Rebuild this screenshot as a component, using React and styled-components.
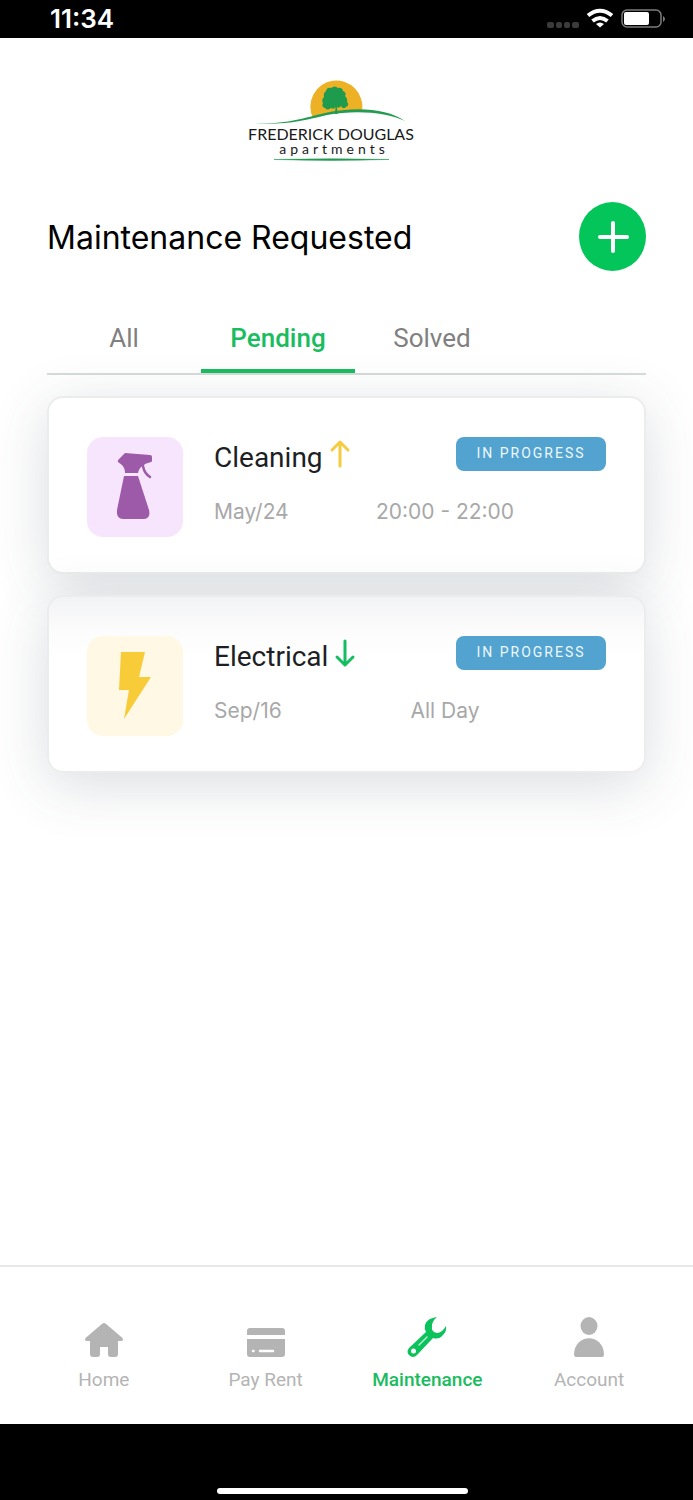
import React from 'react';
import styled, {createGlobalStyle} from 'styled-components';

const GlobalStyle = createGlobalStyle`
    * {
        box-sizing: border-box;
    }

    body {
        margin: 0;
        background: #fff;
        font-family: Roboto, "Liberation Sans", sans-serif;
    }

    h1, h2, p {
        margin: 0;
        font-weight: 400;
    }

    button {
        border: 0;
        padding: 0;
        background: none;
        font-family: inherit;
        cursor: pointer;
    }
`;

const Screen = styled.div`
    display: flex;
    flex-direction: column;
    min-height: 100vh;
`;

const StatusBar = styled.header`
    display: flex;
    align-items: center;
    justify-content: space-between;
    height: 38px;
    padding: 0 26px 0 50px;
    background: #000;
    color: #fff;
`;

const Clock = styled.time`
    font-family: Inter, sans-serif;
    font-size: 26px;
    font-weight: 600;
    line-height: 38px;
`;

const StatusIcons = styled.svg`
    width: 120px;
    height: 24px;
`;

const Main = styled.main`
    display: flex;
    flex: 1;
    flex-direction: column;
    padding: 38px 47px 40px;
`;

const LogoSvg = styled.svg`
    align-self: center;
    width: 180px;
    height: 90px;
    margin-right: 31px;
`;

const TitleRow = styled.div`
    display: flex;
    align-items: center;
    justify-content: space-between;
    margin-top: 36px;
`;

const Title = styled.h1`
    padding-top: 3px;
    color: #000;
    font-family: Inter, sans-serif;
    font-size: 32px;
    line-height: 40px;
`;

const AddButton = styled.button`
    display: flex;
    align-items: center;
    justify-content: center;
    width: 67px;
    height: 69px;
    border-radius: 50%;
    background: #04c55a;

    svg {
        width: 32px;
        height: 32px;
    }
`;

const Tabs = styled.div`
    display: flex;
    margin-top: 28px;
    border-bottom: 2px solid #d8dbdc;
`;

const Tab = styled.button`
    width: 154px;
    height: 74px;
    padding-top: 7px;
    border-bottom: 4px solid ${props => props.$active ? '#1abc60' : 'transparent'};
    color: ${props => props.$active ? '#1abc60' : '#808080'};
    font-size: 26px;
    font-weight: ${props => props.$active ? 500 : 400};
    line-height: 32px;
`;

const Requests = styled.div`
    display: flex;
    flex-direction: column;
    gap: 21px;
    margin-top: 21px;
`;

const Card = styled.article`
    display: flex;
    gap: 31px;
    padding: 39px 38px 35px;
    border: 2px solid #ebecec;
    border-radius: 16px;
    background: ${props => props.$shade};
    box-shadow: 0 12px 56px rgba(60, 72, 88, 0.19);
`;

const IconTile = styled.div`
    display: flex;
    flex: none;
    align-items: center;
    justify-content: center;
    width: 96px;
    height: 100px;
    border-radius: 16px;
    background: ${props => props.$tint};

    svg {
        width: 40px;
        height: 70px;
    }
`;

const Details = styled.div`
    flex: 1;
`;

const CardTop = styled.div`
    display: flex;
    align-items: flex-start;
    justify-content: space-between;
`;

const Name = styled.h2`
    display: flex;
    gap: 6px;
    color: #1d1f24;
    font-size: 28px;
    line-height: 42px;

    svg {
        width: 22px;
        height: 36px;
    }
`;

const Badge = styled.span`
    width: 150px;
    height: 34px;
    border-radius: 8px;
    background: #52a3d0;
    color: #eef8fc;
    font-size: 14px;
    letter-spacing: 2px;
    line-height: 33px;
    text-align: center;
`;

const CardMeta = styled.div`
    display: flex;
    margin-top: 19px;
    color: #a8a8a8;
    font-family: Inter, sans-serif;
    font-size: 21px;
    font-weight: 300;
    line-height: 28px;
`;

const DateText = styled.p`
    width: 134px;
`;

const TimeText = styled.p`
    width: 194px;
    text-align: center;
`;

const BottomNav = styled.nav`
    display: grid;
    grid-template-columns: repeat(4, 1fr);
    padding: 50px 23px 32px;
    border-top: 2px solid #e8e8e8;
`;

const NavLink = styled.a`
    display: flex;
    flex-direction: column;
    align-items: center;
    gap: 7px;
    color: ${props => props.$active ? '#1abc60' : '#b4b4b4'};
    font-size: 19px;
    font-weight: ${props => props.$active ? 500 : 400};
    line-height: 24px;
    text-decoration: none;

    svg {
        width: 42px;
        height: 44px;
    }
`;

const HomeArea = styled.footer`
    display: flex;
    align-items: flex-end;
    justify-content: center;
    height: 76px;
    padding: 0 8px 6px 0;
    background: #000;
`;

const HomeIndicator = styled.div`
    width: 251px;
    height: 6px;
    border-radius: 3px;
    background: #fff;
`;

const Logo = () => (
    <LogoSvg viewBox="0 0 180 90" role="img" aria-label="Frederick Douglas apartments">
        <path d="M72 42A26 26 0 1 1 121 35Q97 34 72 42Z" fill="#edb126"/>
        <path
            d="M94 38L94.500 31Q93 34 90 32Q86 35 84 32Q80 31 82 27Q80 24 83 21Q82 17 85 15Q86 11 90 12Q94 9 97 12Q101 11 102 15Q106 17 104 20Q107 23 106 26Q109 29 105 31Q102 34 100 30Q98 33 96 31L96.500 38Z"
            fill="#1f9b4e"/>
        <path d="M14 47.500C48 48 62 42 84 37C116 30 147 33 164 45C146 36.500 116 33.500 86 39C64 44 48 49 14 47.500Z"
              fill="#239b50"/>
        <text x="90" y="64" textAnchor="middle" fontFamily="Lato, sans-serif" fontSize="16" fill="#191919">FREDERICK DOUGLAS</text>
        <text x="93" y="78" textAnchor="middle" fontFamily="Lato, sans-serif" fontSize="14" letterSpacing="4" fill="#191919">apartments</text>
        <path d="M33 83.500Q90 82 148 83.500Q90 85.500 33 83.500Z" fill="#239b50" stroke="#239b50" strokeWidth="0.500"/>
    </LogoSvg>
);

const PhoneIcons = () => (
    <StatusIcons viewBox="0 0 120 24" role="img" aria-label="Wi-Fi and battery">
        <g fill="#3b3b3b">
            <rect x="0" y="15" width="7" height="6" rx="2"/>
            <rect x="9" y="15" width="6" height="6" rx="2"/>
            <rect x="17" y="15" width="6" height="6" rx="2"/>
            <rect x="25" y="15" width="7" height="6" rx="2"/>
        </g>
        <g fill="none" stroke="#fff" strokeWidth="4">
            <path d="M41 8.500Q53 -1 65 8.500"/>
            <path d="M45.500 14Q53 8 60.500 14"/>
        </g>
        <path d="M49 17Q53 14 57 17L53 20.500Z" fill="#fff"/>
        <rect x="75" y="3" width="39" height="17" rx="5" fill="none" stroke="#7c7c7c" strokeWidth="1.500"/>
        <rect x="77" y="5" width="25" height="13" rx="2" fill="#fff"/>
        <path d="M116 9Q120 12 116 15Z" fill="#7c7c7c"/>
    </StatusIcons>
);

const PlusIcon = () => (
    <svg viewBox="0 0 32 32" fill="none" stroke="#fff" strokeWidth="4" strokeLinecap="round" aria-hidden="true">
        <path d="M16 2V30M3 16H30"/>
    </svg>
);

const SprayIcon = () => (
    <svg viewBox="0 0 40 70" fill="#9c5aa8" aria-hidden="true">
        <path d="M10 1L35 3Q37 3 37 5V9Q37 10 36 10L30 12Q29 14 26 15Q24 17 23 21H10Q10 16 7 13L3 10Q2 9 4 7Z"/>
        <path d="M28 14Q29 21 35 25" fill="none" stroke="#9c5aa8" strokeWidth="2.500" strokeLinecap="round"/>
        <path d="M9 24H23L34 58Q36 67 28 67H8Q1 67 2 58Z"/>
    </svg>
);

const BoltIcon = () => (
    <svg viewBox="0 0 40 70" fill="#f8cb38" aria-hidden="true">
        <path d="M6 1H30L24 26H36L9 68L14 39H4Z"/>
    </svg>
);

const ArrowIcon = ({up}) => (
    <svg viewBox="0 0 22 36" fill="none" stroke={up ? '#f5cb40' : '#13bd60'} strokeWidth="3"
         strokeLinecap="round" strokeLinejoin="round" aria-hidden="true">
        <path d={up ? 'M11 29V5M3 13L11 5L19 13' : 'M11 5V29M3 21L11 29L19 21'}/>
    </svg>
);

const HomeIcon = () => (
    <svg viewBox="0 0 42 44" fill="currentColor" aria-hidden="true">
        <path d="M19.500 6.500Q21 5.500 22.500 6.500L39.500 21Q41 24 38 24H35V37Q35 40 32 40H28Q25 40 25 37V30H17V37Q17 40 14 40H10Q7 40 7 37V24H4Q1 24 2.500 21Z"/>
    </svg>
);

const CardIcon = () => (
    <svg viewBox="0 0 42 44" fill="currentColor" aria-hidden="true">
        <path d="M2 18V14Q2 11 5 11H37Q40 11 40 14V18Z"/>
        <path d="M2 22H40V37Q40 40 37 40H5Q2 40 2 37Z"/>
        <path d="M8 34H8.500M15 34H28" fill="none" stroke="#fff" strokeWidth="2.500" strokeLinecap="round"/>
    </svg>
);

const WrenchIcon = () => (
    <svg viewBox="0 0 42 44" aria-hidden="true">
        <path
            d="M31 0Q21 1 19 8Q18 12 20 15L3 31Q0 35 3 38Q7 42 11 38L27 21Q33 23 37 18Q41 14 40 9Q36 16 31 16Q25 15 26 9Q26 4 31 0Z"
            fill="#0bc25b"/>
        <circle cx="7.500" cy="34" r="2.500" fill="#fff"/>
        <path d="M13 28L21 20" stroke="#b9efd0" strokeWidth="1.500" strokeLinecap="round"/>
    </svg>
);

const PersonIcon = () => (
    <svg viewBox="0 0 42 44" fill="currentColor" aria-hidden="true">
        <ellipse cx="21" cy="9" rx="8.500" ry="9"/>
        <path d="M6 37C7 16 35 16 36 37Q36 40 34 40H8Q6 40 6 37Z"/>
    </svg>
);

const tabs = ['All', 'Pending', 'Solved'];

const requests = [
    {
        name: 'Cleaning',
        date: 'May/24',
        time: '20:00 - 22:00',
        up: true,
        tint: '#f6e5fc',
        shade: '#fff',
        icon: <SprayIcon/>
    },
    {
        name: 'Electrical',
        date: 'Sep/16',
        time: 'All Day',
        up: false,
        tint: '#fef8e5',
        shade: 'linear-gradient(#f2f3f5, #fcfcfc 20%, #fff 36%)',
        icon: <BoltIcon/>
    }
];

const navItems = [
    {label: 'Home', icon: <HomeIcon/>},
    {label: 'Pay Rent', icon: <CardIcon/>},
    {label: 'Maintenance', icon: <WrenchIcon/>},
    {label: 'Account', icon: <PersonIcon/>}
];

const RequestCard = ({request}) => (
    <Card $shade={request.shade}>
        <IconTile $tint={request.tint}>{request.icon}</IconTile>
        <Details>
            <CardTop>
                <Name>{request.name}<ArrowIcon up={request.up}/></Name>
                <Badge>IN PROGRESS</Badge>
            </CardTop>
            <CardMeta>
                <DateText>{request.date}</DateText>
                <TimeText>{request.time}</TimeText>
            </CardMeta>
        </Details>
    </Card>
);

const App = () => {
    const [tab, setTab] = React.useState('Pending');

    return (
        <>
            <GlobalStyle/>
            <Screen>
                <StatusBar>
                    <Clock>11:34</Clock>
                    <PhoneIcons/>
                </StatusBar>
                <Main>
                    <Logo/>
                    <TitleRow>
                        <Title>Maintenance Requested</Title>
                        <AddButton type="button" aria-label="Add request"><PlusIcon/></AddButton>
                    </TitleRow>
                    <Tabs role="tablist">
                        {tabs.map(name => (
                            <Tab key={name} type="button" role="tab" aria-selected={tab === name}
                                 $active={tab === name} onClick={() => setTab(name)}>{name}</Tab>
                        ))}
                    </Tabs>
                    <Requests>
                        {requests.map(request => <RequestCard key={request.name} request={request}/>)}
                    </Requests>
                </Main>
                <BottomNav>
                    {navItems.map(item => (
                        <NavLink key={item.label} href="#" $active={item.label === 'Maintenance'}>
                            {item.icon}
                            {item.label}
                        </NavLink>
                    ))}
                </BottomNav>
                <HomeArea><HomeIndicator/></HomeArea>
            </Screen>
        </>
    );
};

export default App;
